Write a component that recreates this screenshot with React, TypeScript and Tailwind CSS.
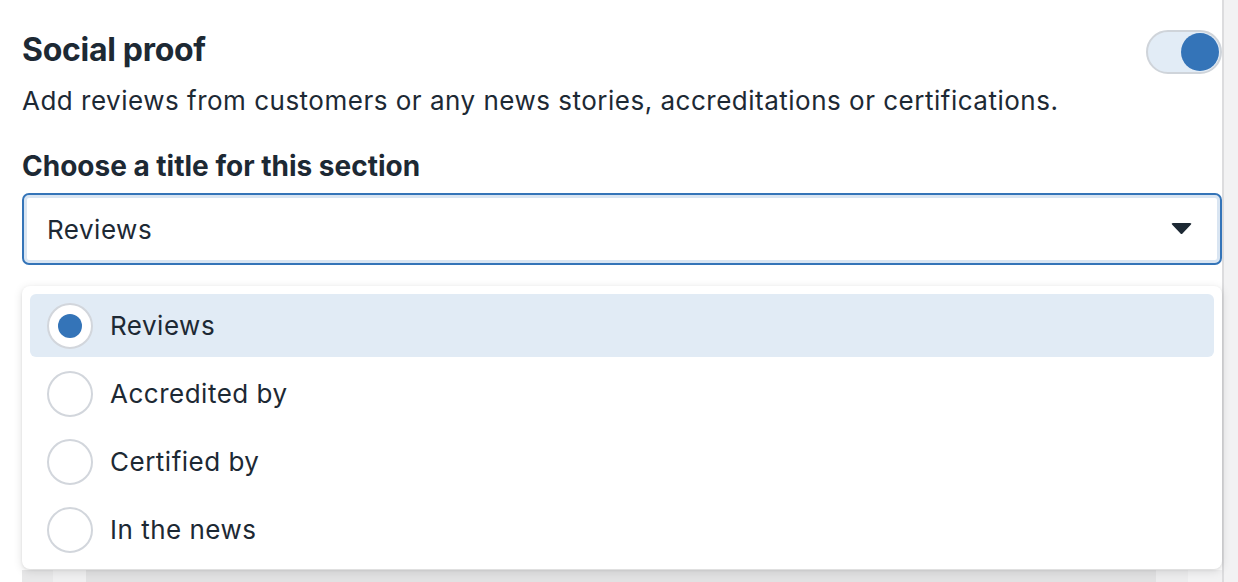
import { useState } from "react";

const options = ["Reviews", "Accredited by", "Certified by", "In the news"];

export default function App() {
  const [selected, setSelected] = useState(0);
  const [enabled, setEnabled] = useState(true);

  return (
    <div
      className="flex w-[1238px] h-[582px] overflow-hidden bg-[#f2f2f3] text-[#1d2934]"
      style={{ fontFamily: "Inter, 'Noto Sans', 'Liberation Sans', sans-serif" }}
    >
      <div className="relative w-[1224px] h-full bg-white border-r-2 border-[#dcdcde]">
        <div className="pl-[22px] pt-[30px]">
          <div className="flex items-start justify-between">
            <h2 className="text-[32px] font-bold leading-[40px] tracking-[-0.3px]">Social proof</h2>
            <button
              onClick={() => setEnabled(!enabled)}
              className={`flex w-[76px] h-[44px] rounded-full border-2 border-[#cfd4da] bg-[#e2ecf6] p-[1px] ${enabled ? "justify-end" : "justify-start"}`}
            >
              <span className="w-[38px] h-[38px] rounded-full bg-[#3474b8]" />
            </button>
          </div>
          <p className="mt-[10px] text-[26px] leading-[34px] tracking-[0.5px]">
            Add reviews from customers or any news stories, accreditations or certifications.
          </p>
          <h3 className="mt-[30px] text-[28px] font-bold leading-[36px]">
            Choose a title for this section
          </h3>
          <div className="mt-[9px] flex items-center justify-between h-[72px] rounded-[7px] border-2 border-[#3474b8] shadow-[inset_0_0_0_3px_#d9e5f2] pl-[23px] pr-[28px]">
            <span className="text-[26px] tracking-[0.5px]">{options[selected]}</span>
            <svg width="21" height="12" viewBox="0 0 21 12">
              <path d="M1 1.5 Q0 0 2 0 H19 Q21 0 20 1.5 L11.5 10.5 Q10.5 11.6 9.5 10.5 Z" fill="#1d2934" />
            </svg>
          </div>
        </div>

        <div className="absolute left-[22px] right-0 top-[570px] bottom-0 bg-[#e1e1e2]">
          <div className="flex h-full">
            <div className="w-[31px] bg-[#e8e8e9]" />
            <div className="w-[33px] bg-[#efeff0]" />
            <div className="flex-1" />
            <div className="w-[32px] bg-[#ececed]" />
            <div className="w-[34px] bg-[#f2f2f3]" />
          </div>
        </div>

        <div className="absolute left-[22px] top-[286px] w-[1200px] rounded-[8px] bg-white p-[8px] shadow-[0_2px_10px_rgba(0,0,0,0.12),0_1px_3px_rgba(0,0,0,0.08)]">
          {options.map((label, i) => (
            <div
              key={label}
              onClick={() => setSelected(i)}
              className={`flex items-center h-[63px] mb-[5px] last:mb-0 rounded-[6px] pl-[17px] cursor-pointer ${i === selected ? "bg-[#e1ebf5]" : ""}`}
            >
              <span className="flex items-center justify-center w-[46px] h-[46px] rounded-full border-2 border-[#d2d6dc] bg-white">
                {i === selected && <span className="w-[24px] h-[24px] rounded-full bg-[#3474b8]" />}
              </span>
              <span className="ml-[17px] text-[26px] tracking-[0.5px]">{label}</span>
            </div>
          ))}
        </div>
      </div>
    </div>
  );
}
